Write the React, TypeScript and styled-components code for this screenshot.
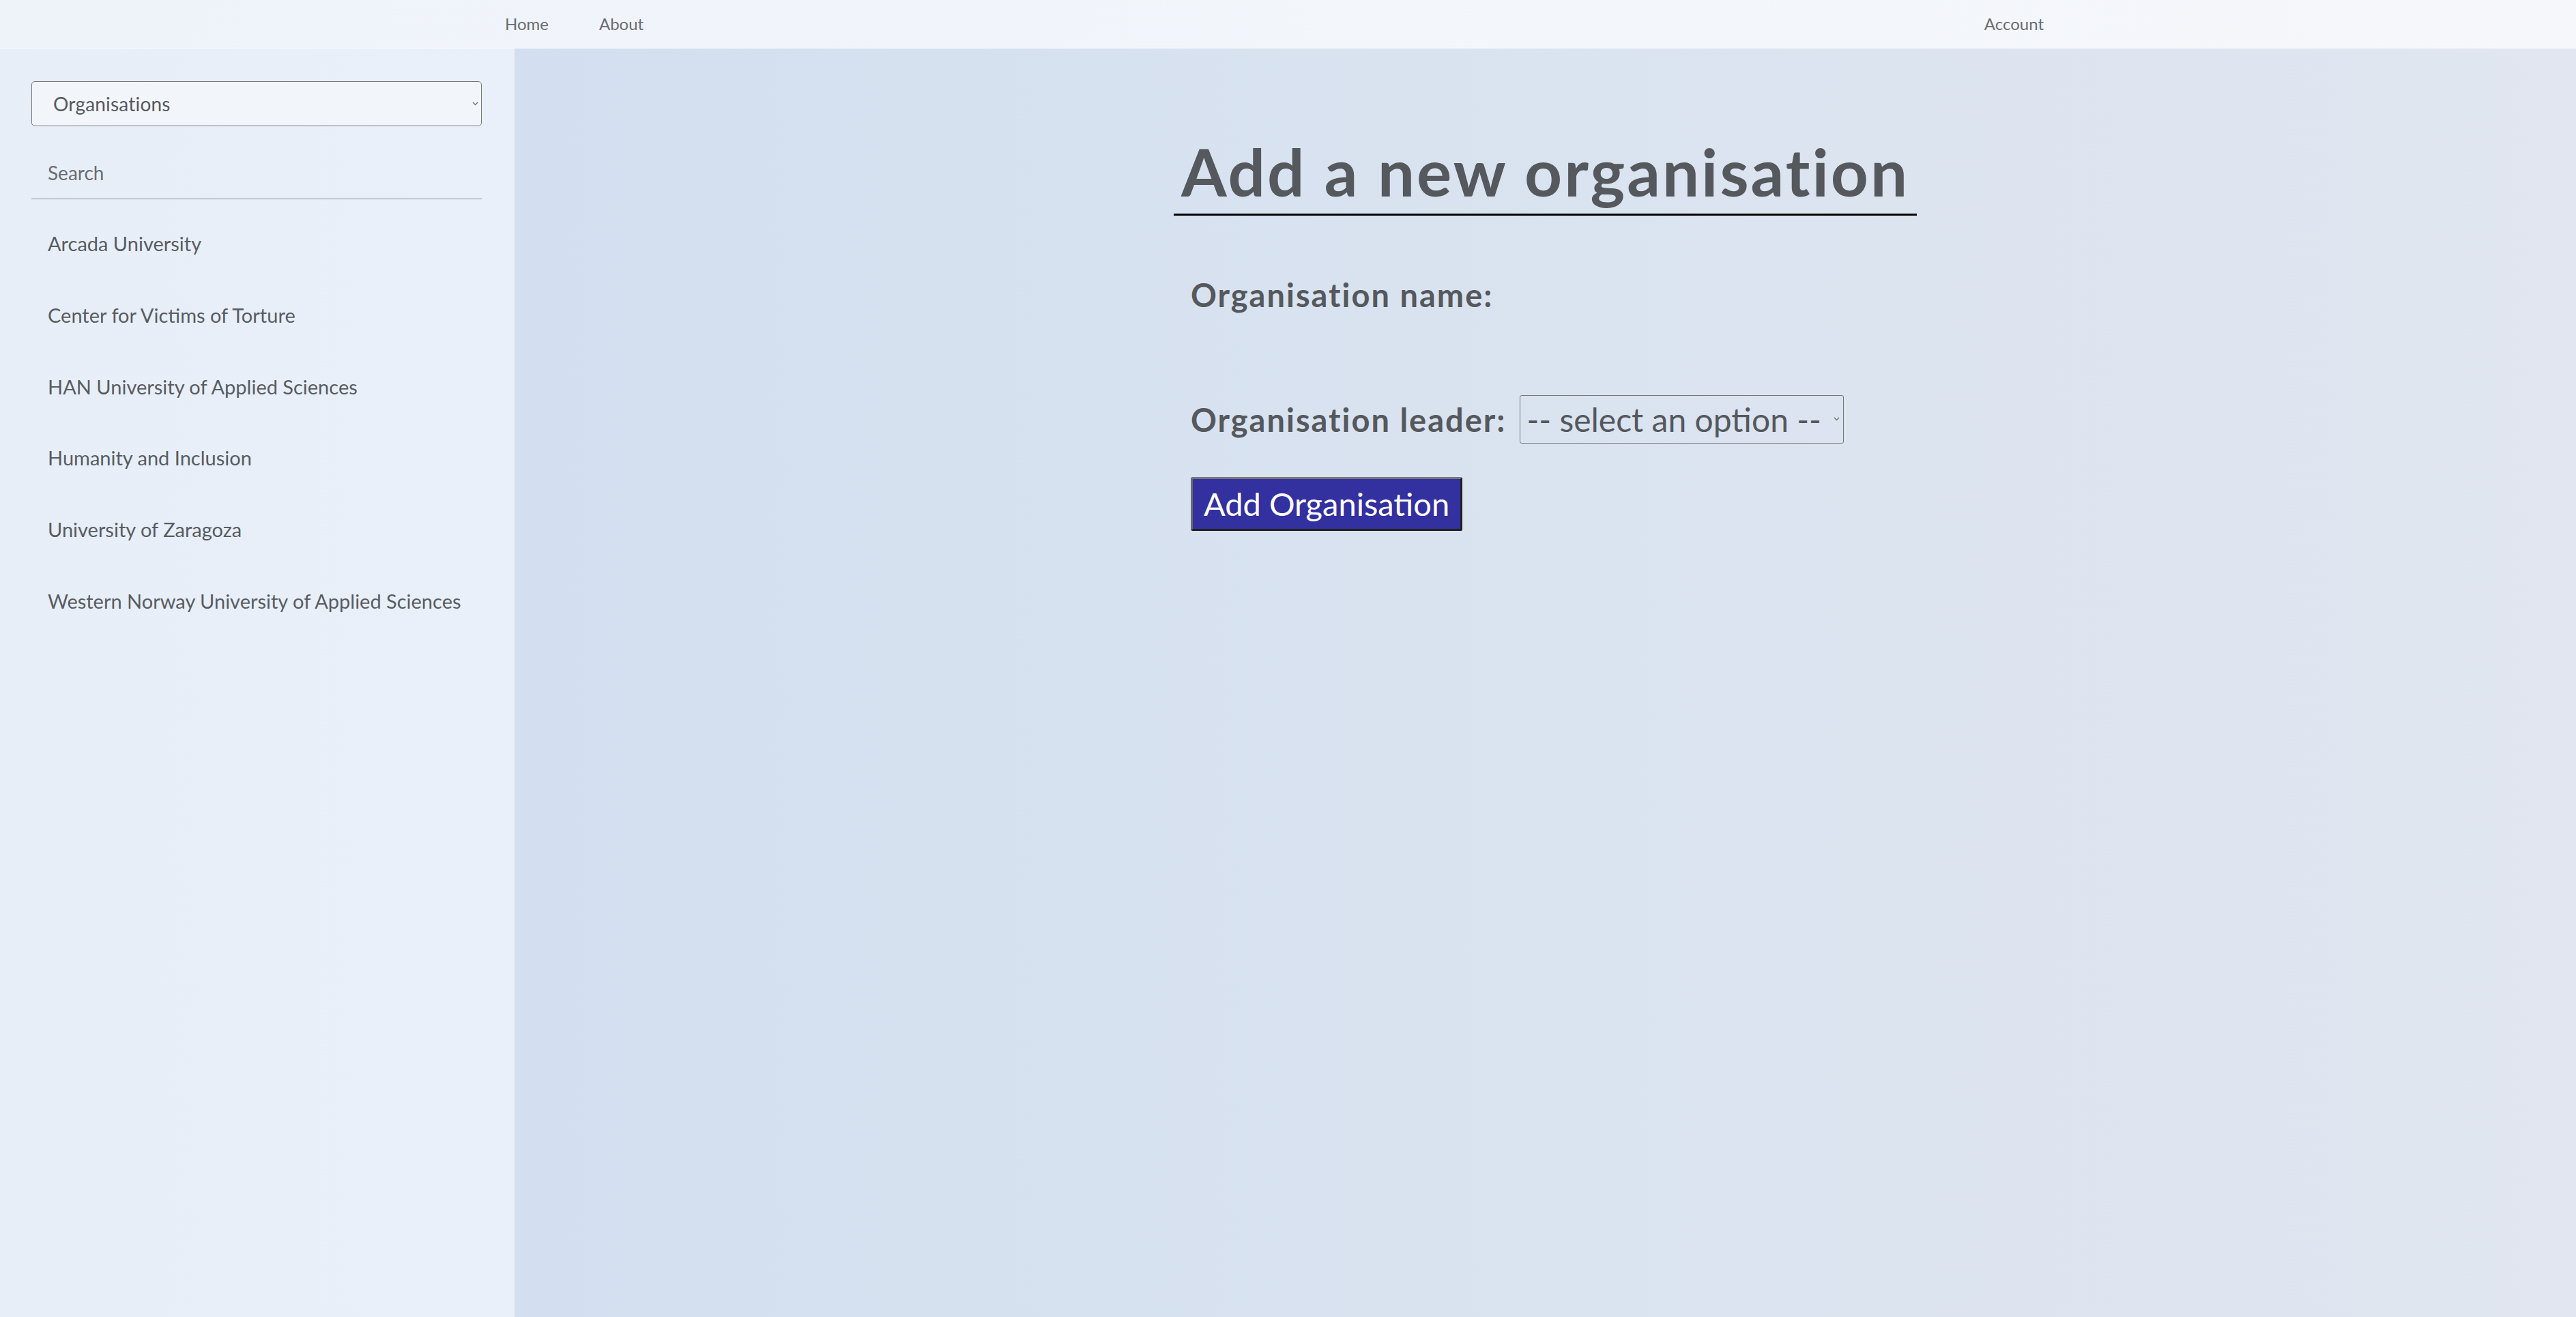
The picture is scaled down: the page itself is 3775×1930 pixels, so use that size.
import React from "react";
import styled, { createGlobalStyle } from "styled-components";

const GlobalStyle = createGlobalStyle`
  html, body { margin: 0; padding: 0; }
  body { font-family: Lato, "Open Sans", sans-serif; }
  * { box-sizing: border-box; }
`;

const Page = styled.div`
  display: flex;
  flex-direction: column;
  min-height: 100vh;
`;

const TopBar = styled.header`
  height: 71px;
  border-bottom: 1px solid #ffffff;
  background: linear-gradient(90deg, #eef3fa 0%, #f3f6fb 60%, #f5f7fa 100%);
`;

const NavInner = styled.nav`
  width: 2295px;
  height: 70px;
  margin: 0 auto;
  display: flex;
  align-items: center;
  gap: 74px;
`;

const NavLink = styled.a<{ $push?: boolean }>`
  font: 400 24px/1.2 Lato, sans-serif;
  color: #6a6c6f;
  text-decoration: none;
  ${(p) => (p.$push ? "margin-left: auto; margin-right: 40px;" : "")}
`;

const Body = styled.div`
  flex: 1;
  display: flex;
  min-height: calc(100vh - 71px);
`;

const Sidebar = styled.aside`
  width: 754px;
  flex-shrink: 0;
  padding: 48px 48px 0 46px;
  background: linear-gradient(90deg, #e7eef8 0%, #e9f0f9 100%);
`;

const SelectWrap = styled.div`
  position: relative;
  display: inline-block;
`;

const SideSelectWrap = styled(SelectWrap)`
  display: block;
`;

const Chevron = styled.svg<{ $right: number }>`
  position: absolute;
  top: 50%;
  right: ${(p) => p.$right}px;
  width: 9px;
  height: 6px;
  transform: translateY(-50%);
  pointer-events: none;
`;

const SideSelect = styled.select`
  appearance: none;
  display: block;
  width: 100%;
  height: 66px;
  border: 1px solid #767676;
  border-radius: 5px;
  background: #f2f6fb;
  color: #56595d;
  font: 400 28px Lato, sans-serif;
  letter-spacing: 0.2px;
  padding: 0 30px 0 31px;
  outline: none;
`;

const SearchInput = styled.input`
  display: block;
  width: 100%;
  height: 77px;
  margin-top: 30px;
  border: none;
  border-bottom: 1px solid #8a8c90;
  background: transparent;
  font: 400 28px Lato, sans-serif;
  color: #56595d;
  padding: 0 24px;
  outline: none;
  &::placeholder {
    color: #6a6d71;
  }
`;

const OrgList = styled.ul`
  list-style: none;
  margin: 13px 0 0;
  padding: 0;
`;

const OrgItem = styled.li`
  padding: 35px 24px;
  font: 400 29px/1.2 Lato, sans-serif;
  color: #585c61;
  white-space: nowrap;
`;

const Main = styled.main`
  flex: 1;
  display: flex;
  justify-content: center;
  align-items: flex-start;
  background: linear-gradient(90deg, #d3dff0 0%, #d9e3f0 45%, #e1e6f0 100%);
`;

const Content = styled.section`
  display: flex;
  flex-direction: column;
  align-items: flex-start;
  padding-top: 122px;
`;

const Heading = styled.h1`
  margin: 0;
  padding: 0 11px 5px;
  font: 700 96px/1.2 Lato, sans-serif;
  letter-spacing: 3px;
  color: #55585c;
  border-bottom: 3px solid #000;
  white-space: nowrap;
`;

const Form = styled.form`
  display: flex;
  flex-direction: column;
  align-items: flex-start;
  padding-left: 25px;
  margin-top: 88px;
`;

const Row = styled.div<{ $gap: number }>`
  display: flex;
  align-items: baseline;
  gap: 20px;
  margin-bottom: ${(p) => p.$gap}px;
`;

const Label = styled.label`
  font: 700 47px/1.2 Lato, sans-serif;
  letter-spacing: 2px;
  color: #55585c;
  white-space: nowrap;
`;

const LeaderSelect = styled.select`
  appearance: none;
  height: 71px;
  border: 1px solid #767676;
  border-radius: 3px;
  background: transparent;
  color: #55585c;
  font: 400 48px Lato, sans-serif;
  padding: 0 32px 0 9px;
  outline: none;
`;

const SubmitButton = styled.button`
  height: 79px;
  padding: 0 16px;
  background: #3330a0;
  color: #ffffff;
  font: 400 47px Lato, sans-serif;
  border-width: 3px;
  border-style: solid;
  border-color: #76767a #1f1f24 #1f1f24 #6a6a70;
  border-radius: 3px;
  cursor: pointer;
`;

const ChevronIcon = ({ right }: { right: number }) => (
  <Chevron $right={right} viewBox="0 0 9 6">
    <path d="M1 1 L4.5 4.5 L8 1" fill="none" stroke="#6b6b6b" strokeWidth="1.3" />
  </Chevron>
);

const orgs = [
  "Arcada University",
  "Center for Victims of Torture",
  "HAN University of Applied Sciences",
  "Humanity and Inclusion",
  "University of Zaragoza",
  "Western Norway University of Applied Sciences",
];

export default function App() {
  return (
    <>
      <GlobalStyle />
      <Page>
        <TopBar>
          <NavInner>
            <NavLink href="#">Home</NavLink>
            <NavLink href="#">About</NavLink>
            <NavLink href="#" $push>
              Account
            </NavLink>
          </NavInner>
        </TopBar>
        <Body>
          <Sidebar>
            <SideSelectWrap>
              <SideSelect defaultValue="org">
                <option value="org">Organisations</option>
              </SideSelect>
              <ChevronIcon right={5} />
            </SideSelectWrap>
            <SearchInput placeholder="Search" />
            <OrgList>
              {orgs.map((o) => (
                <OrgItem key={o}>{o}</OrgItem>
              ))}
            </OrgList>
          </Sidebar>
          <Main>
            <Content>
              <Heading>Add a new organisation</Heading>
              <Form onSubmit={(e) => e.preventDefault()}>
                <Row $gap={118}>
                  <Label>Organisation name:</Label>
                </Row>
                <Row $gap={49}>
                  <Label>Organisation leader:</Label>
                  <SelectWrap>
                    <LeaderSelect defaultValue="">
                      <option value="">-- select an option --</option>
                    </LeaderSelect>
                    <ChevronIcon right={6} />
                  </SelectWrap>
                </Row>
                <SubmitButton type="submit">Add Organisation</SubmitButton>
              </Form>
            </Content>
          </Main>
        </Body>
      </Page>
    </>
  );
}
